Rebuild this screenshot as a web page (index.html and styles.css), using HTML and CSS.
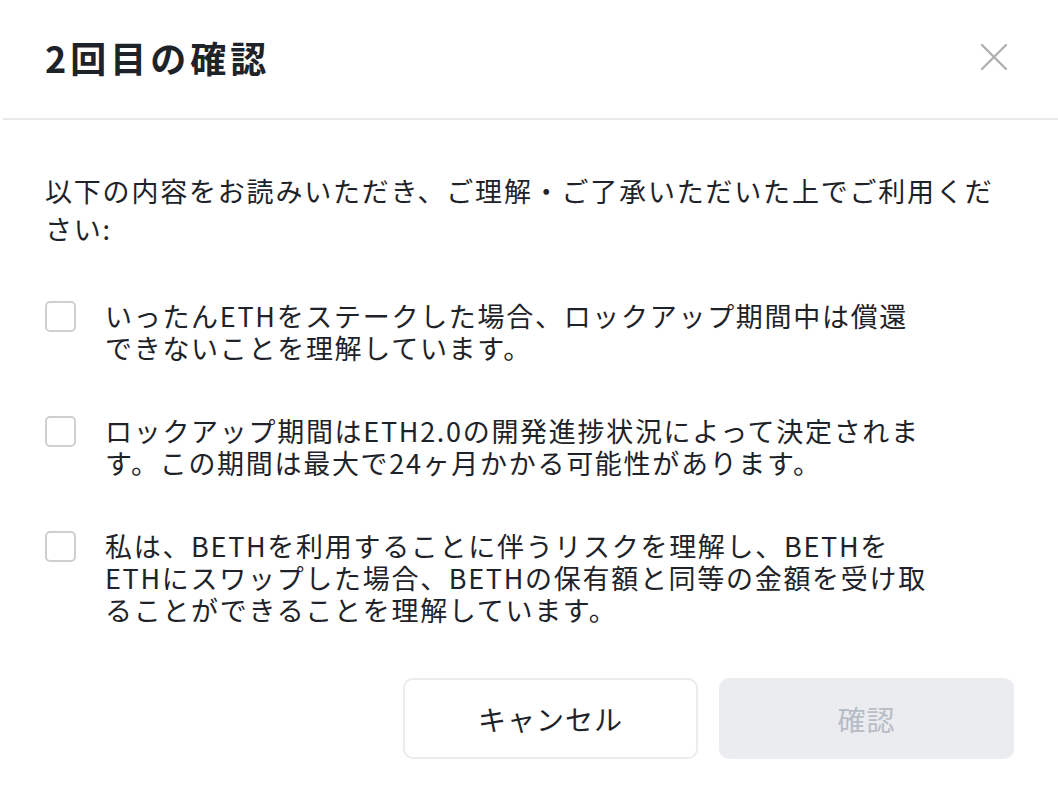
FILE: index.html
```html
<!DOCTYPE html>
<html lang="ja">
<head>
<meta charset="utf-8">
<link rel="stylesheet" href="styles.css">
</head>
<body>
<div class="modal">
  <div class="header">
    <h1 class="title">2回目の確認</h1>
    <button class="close" aria-label="close">
      <svg width="28" height="28" viewBox="0 0 28 28"><path d="M2 2 L26 26 M26 2 L2 26" stroke="#b0b0b0" stroke-width="2.4" fill="none" stroke-linecap="round"/></svg>
    </button>
  </div>
  <div class="body">
    <p class="intro">以下の内容をお読みいただき、ご理解・ご了承いただいた上でご利用くだ<br>さい:</p>
    <div class="items">
      <label class="item"><span class="box"></span><span class="text">いったんETHをステークした場合、ロックアップ期間中は償還<br>できないことを理解しています。</span></label>
      <label class="item"><span class="box"></span><span class="text">ロックアップ期間はETH2.0の開発進捗状況によって決定されま<br>す。この期間は最大で24ヶ月かかる可能性があります。</span></label>
      <label class="item"><span class="box"></span><span class="text">私は、BETHを利用することに伴うリスクを理解し、BETHを<br>ETHにスワップした場合、BETHの保有額と同等の金額を受け取<br>ることができることを理解しています。</span></label>
    </div>
    <div class="actions">
      <button class="btn btn-cancel">キャンセル</button>
      <button class="btn btn-confirm" disabled>確認</button>
    </div>
  </div>
</div>
</body>
</html>
```

FILE: styles.css
```css
* { box-sizing: border-box; }
html, body {
  margin: 0;
  padding: 0;
  background: #ffffff;
}
body {
  font-family: "Noto Sans CJK JP", "Noto Sans", sans-serif;
  color: #1e2329;
  width: 1058px;
  height: 808px;
  overflow: hidden;
}
.modal {
  width: 1058px;
}
.header {
  height: 120px;
  display: flex;
  align-items: center;
  justify-content: space-between;
  padding: 0 50px 4px 45px;
  border-bottom: 2px solid #e9e9e9;
  margin-left: 3px;
}
.title {
  margin: 0 0 0 -3px;
  font-size: 36px;
  font-weight: 700;
  letter-spacing: 4px;
  line-height: 1;
}
.close {
  border: 0;
  background: transparent;
  padding: 0;
  width: 28px;
  height: 28px;
  display: flex;
}
.body {
  padding: 52px 44px 0 45px;
}
.intro {
  margin: 0;
  font-size: 27px;
  line-height: 38px;
  letter-spacing: 1.8px;
}
.items {
  margin-top: 52px;
  display: flex;
  flex-direction: column;
  gap: 51px;
}
.item {
  display: flex;
  align-items: flex-start;
  gap: 29px;
}
.box {
  flex: none;
  width: 31px;
  height: 31px;
  margin-top: 1px;
  border: 2px solid #cfcfcf;
  border-radius: 5px;
}
.text {
  font-size: 27px;
  line-height: 32px;
  letter-spacing: 1.7px;
}
.actions {
  margin-top: 52px;
  display: flex;
  justify-content: flex-end;
  gap: 21px;
}
.btn {
  width: 295px;
  height: 81px;
  border-radius: 10px;
  font-family: "Noto Sans CJK JP", "Noto Sans", sans-serif;
  font-size: 28px;
  letter-spacing: 1px;
}
.btn-cancel {
  background: #ffffff;
  border: 2px solid #ececec;
  color: #1e2329;
}
.btn-confirm {
  background: #eaecef;
  border: 0;
  color: #b7bdc6;
}
```
